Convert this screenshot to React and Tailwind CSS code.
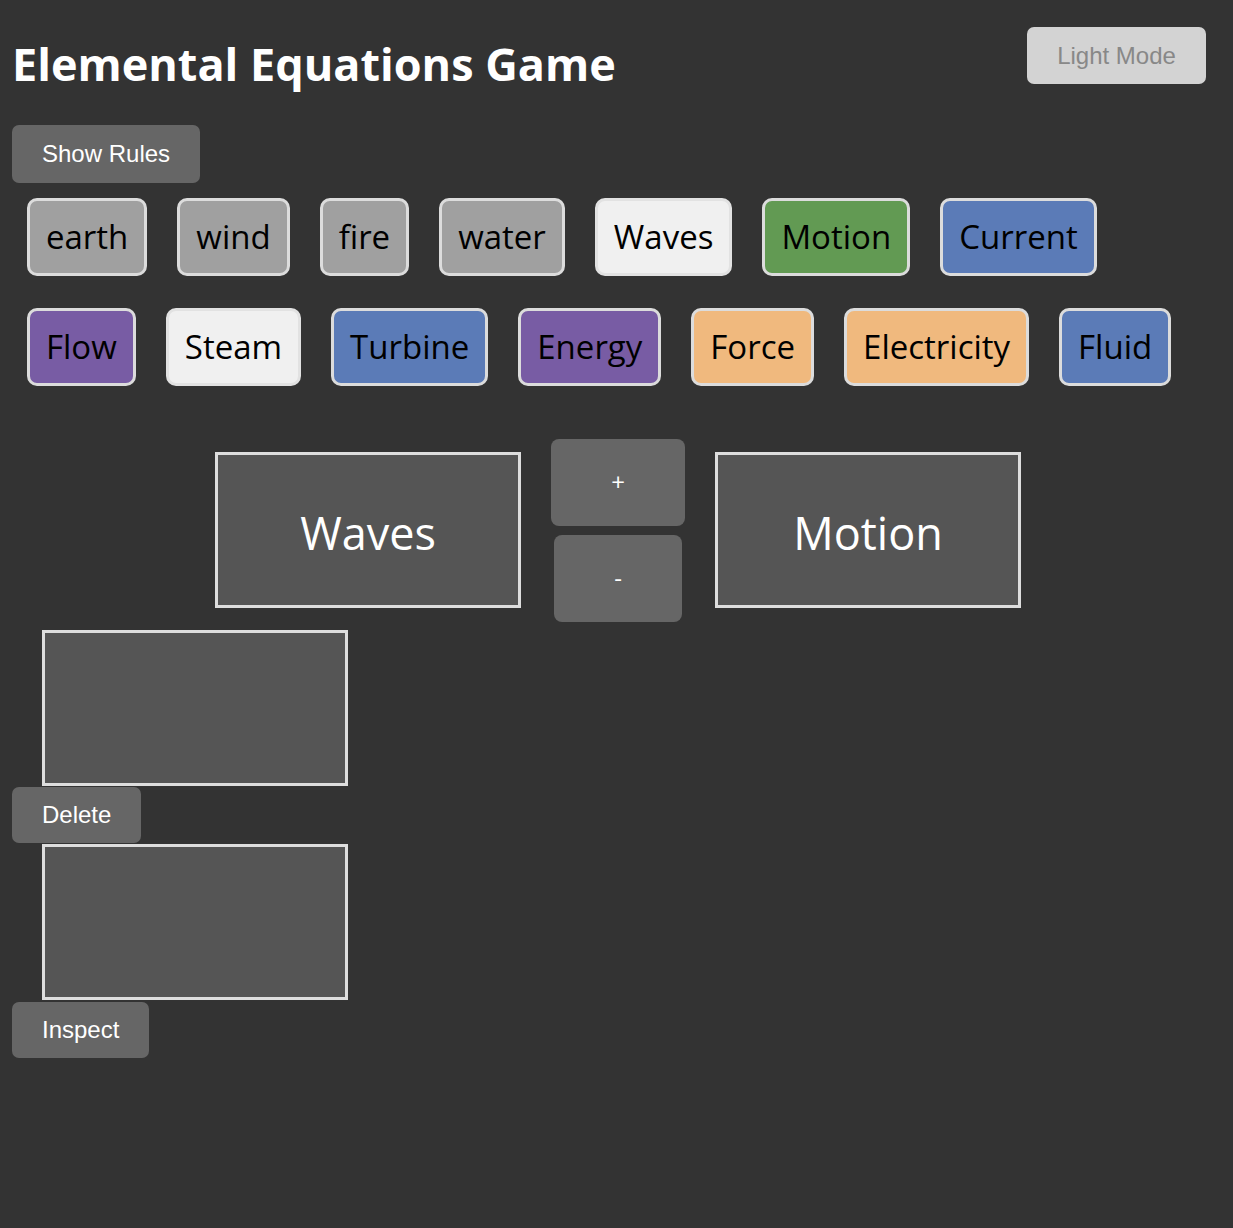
import React from "react";

const seg = "font-['Open_Sans','Noto_Sans',sans-serif]";
const arial = "font-['Liberation_Sans',Arial,sans-serif]";

const row1 = [
  { name: "earth", c: "bg-[#a0a0a0] border-[#dcdcdc]" },
  { name: "wind", c: "bg-[#a0a0a0] border-[#dcdcdc]" },
  { name: "fire", c: "bg-[#a0a0a0] border-[#dcdcdc]" },
  { name: "water", c: "bg-[#a0a0a0] border-[#dcdcdc]" },
  { name: "Waves", c: "bg-[#f0f0f0] border-[#e2e2e2]" },
  { name: "Motion", c: "bg-[#629a53] border-[#dcdcdc]" },
  { name: "Current", c: "bg-[#5b7bb7] border-[#dcdcdc]" },
];
const row2 = [
  { name: "Flow", c: "bg-[#785ca4] border-[#dcdcdc]" },
  { name: "Steam", c: "bg-[#f0f0f0] border-[#e2e2e2]" },
  { name: "Turbine", c: "bg-[#5b7bb7] border-[#dcdcdc]" },
  { name: "Energy", c: "bg-[#785ca4] border-[#dcdcdc]" },
  { name: "Force", c: "bg-[#f0b97e] border-[#dcdcdc]" },
  { name: "Electricity", c: "bg-[#f0b97e] border-[#dcdcdc]" },
  { name: "Fluid", c: "bg-[#5b7bb7] border-[#dcdcdc]" },
];

function Tile({ name, c }) {
  return (
    <div
      className={`m-[15px] rounded-[10px] border-[3px] px-[16px] py-[12px] text-[33px] leading-[48px] text-black ${seg} ${c}`}
    >
      {name}
    </div>
  );
}

function Btn({ children, className = "" }) {
  return (
    <button
      className={`rounded-[7px] bg-[#666] px-[30px] text-[24px] leading-[28px] text-white ${arial} ${className}`}
    >
      {children}
    </button>
  );
}

export default function App() {
  return (
    <div className="min-h-[1228px] bg-[#333] px-[12px]">
      <div className="flex items-start justify-between">
        <h1 className={`mt-[32px] text-[45px] font-bold leading-[64px] text-white ${seg}`}>
          Elemental Equations Game
        </h1>
        <button
          className={`mr-[15px] mt-[27px] h-[57px] w-[179px] rounded-[7px] bg-[#d3d3d3] text-[24px] text-[#888] ${arial}`}
        >
          Light Mode
        </button>
      </div>
      <div className="mt-[29px]">
        <Btn className="h-[58px]">Show Rules</Btn>
      </div>
      <div className="flex flex-wrap">
        {row1.map((t) => (
          <Tile key={t.name} {...t} />
        ))}
      </div>
      <div className="mt-[2px] flex flex-wrap">
        {row2.map((t) => (
          <Tile key={t.name} {...t} />
        ))}
      </div>
      <div className="mt-[36px] flex items-center justify-center gap-[30px] pl-[3px]">
        <div
          className={`my-[15px] flex h-[156px] w-[306px] items-center justify-center border-[3px] border-[#dedede] bg-[#555] pt-[6px] text-[45px] text-white ${seg}`}
        >
          Waves
        </div>
        <div className="flex flex-col items-center gap-[9px]">
          <button className={`h-[87px] w-[134px] rounded-[8px] bg-[#666] text-[24px] text-white ${seg}`}>+</button>
          <button className={`h-[87px] w-[128px] rounded-[8px] bg-[#666] text-[24px] text-white ${seg}`}>-</button>
        </div>
        <div
          className={`my-[15px] flex h-[156px] w-[306px] items-center justify-center border-[3px] border-[#dedede] bg-[#555] pt-[6px] text-[45px] text-white ${seg}`}
        >
          Motion
        </div>
      </div>
      <div className="mt-[7px] flex flex-col items-start">
        <div className="ml-[30px] h-[156px] w-[306px] border-[3px] border-[#dedede] bg-[#555]" />
        <Btn className="mt-px h-[56px]">Delete</Btn>
        <div className="ml-[30px] mt-px h-[156px] w-[306px] border-[3px] border-[#dedede] bg-[#555]" />
        <Btn className="mt-[2px] h-[56px]">Inspect</Btn>
      </div>
    </div>
  );
}
